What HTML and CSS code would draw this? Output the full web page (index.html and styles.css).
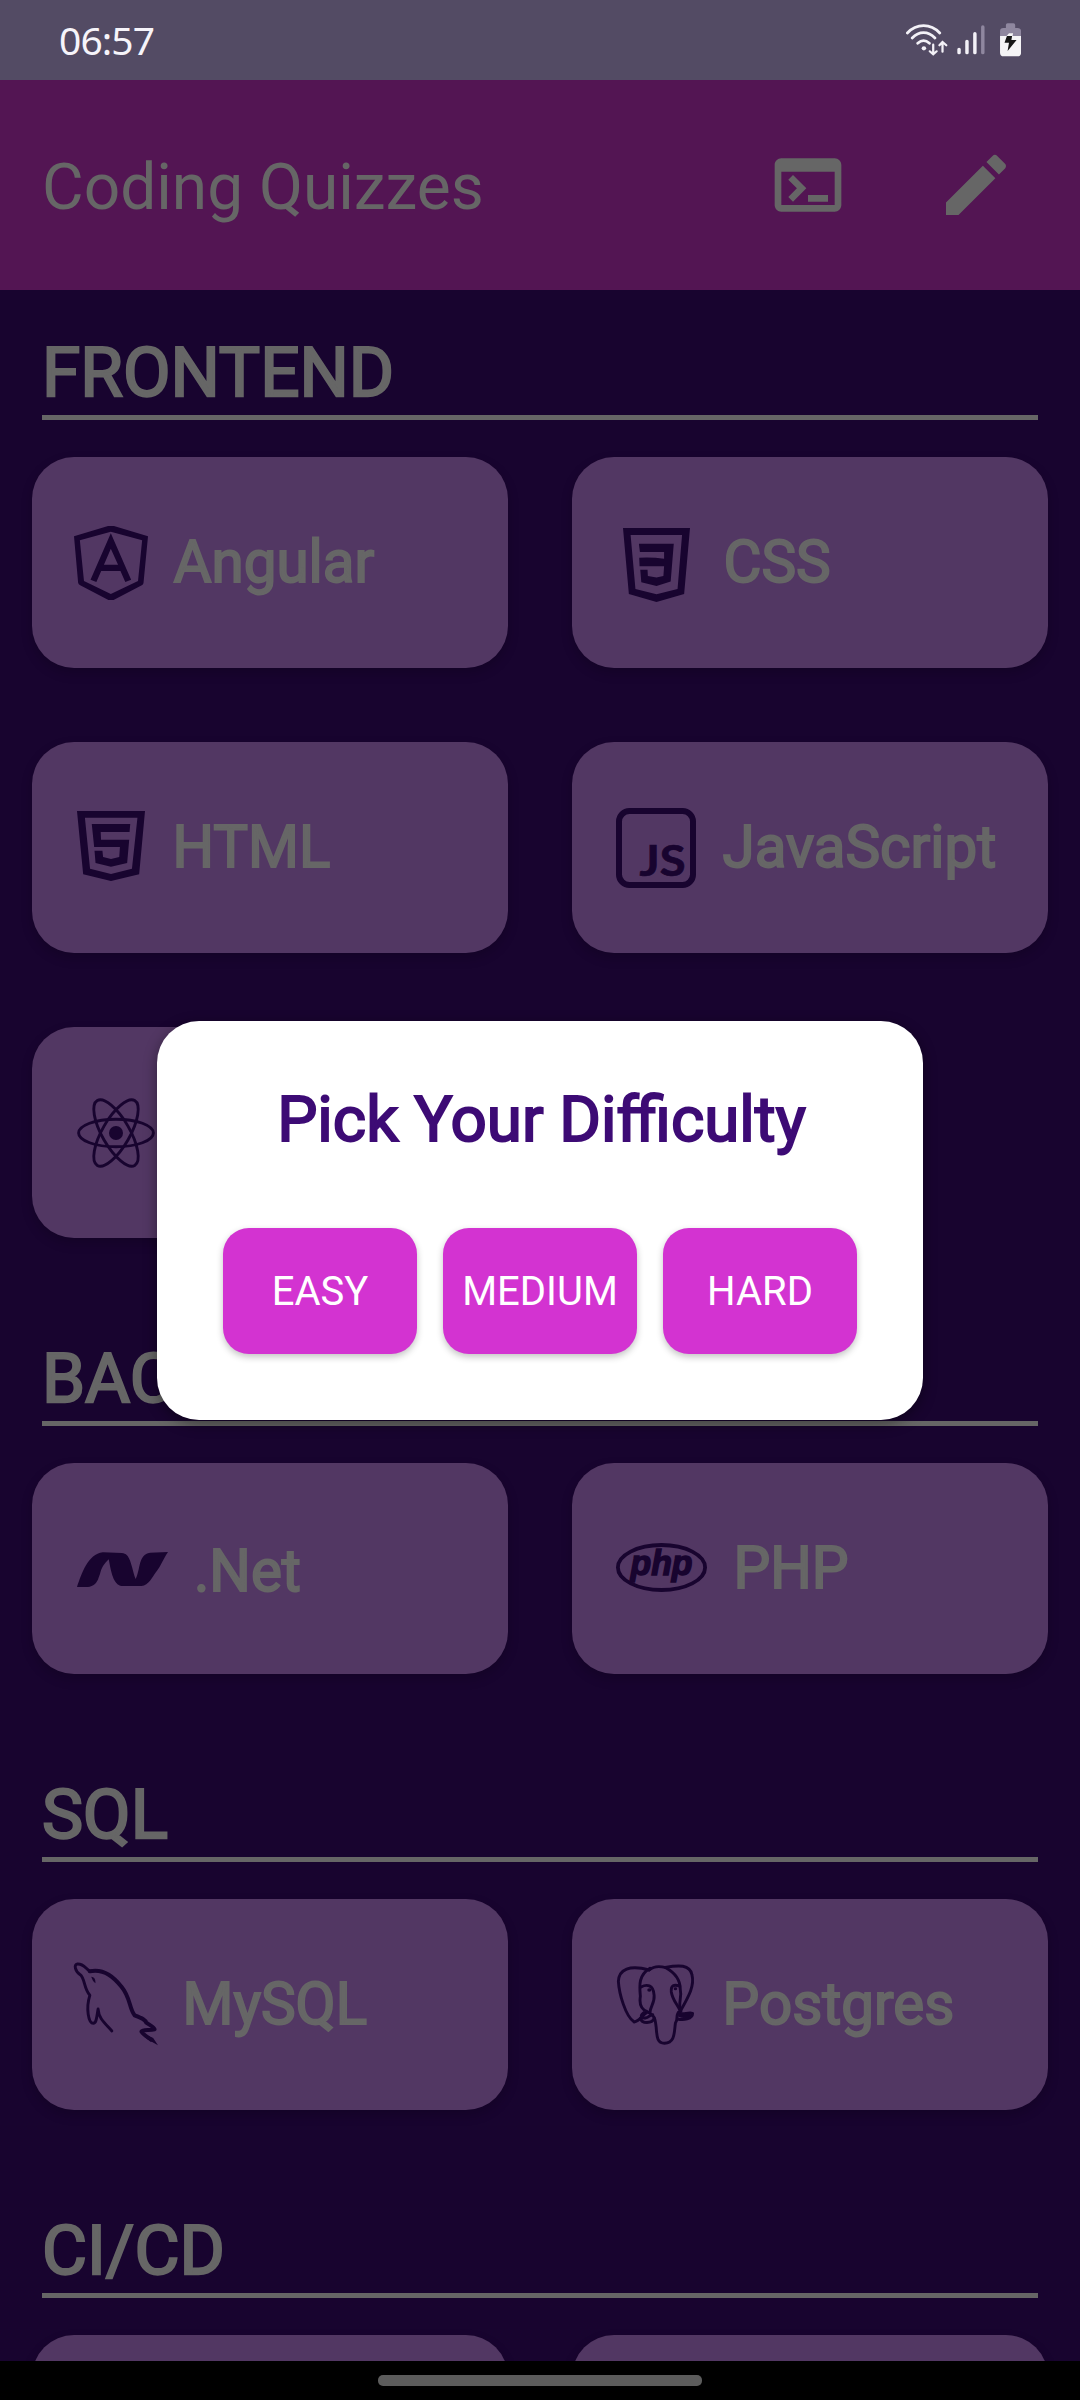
FILE: index.html
```html
<!DOCTYPE html>
<html lang="en">
<head>
<meta charset="utf-8">
<title>Coding Quizzes</title>
<link rel="stylesheet" href="styles.css">
</head>
<body>
<div class="screen">
  <div class="status-bar">
    <span class="clock">06:57</span>
    <svg class="status-icons" viewBox="1063 68 335 100" preserveAspectRatio="none">
      <g fill="none" stroke="#f3f1f7" stroke-linecap="round">
        <path stroke-width="8" d="M1067 98Q1087 76 1114 76T1161 98M1081 113Q1096 97 1114 97T1147 113M1097 129Q1114 113 1131 129"/>
        <path stroke-width="6.500" d="M1142 133V161M1132 153L1142 162L1152 153M1169 154V126M1160 135L1169 125L1180 135"/>
        <path stroke-width="10" d="M1217 147V157M1240 123V157M1263 100V157"/>
        <path stroke="#8f879f" stroke-width="10" d="M1286 80V157"/>
      </g>
      <circle cx="1115" cy="144" r="6.500" fill="#f3f1f7"/>
      <path fill="#8f879f" d="M1336 107V93Q1336 83 1346 83H1353V74Q1353 69 1358 69H1375Q1380 69 1380 74V83H1387Q1397 83 1397 93V107Z"/>
      <path fill="#f5f4f6" d="M1336 107H1355L1362 99H1374L1372 107H1397V157Q1397 168 1386 168H1347Q1336 168 1336 157Z"/>
      <path fill="#161616" d="M1356 107H1371L1369 119H1384L1358 152L1362 127H1349Z"/>
    </svg>
  </div>

  <header class="app-bar">
    <h1 class="app-title">Coding Quizzes</h1>
    <svg class="action" viewBox="0 0 24 24"><path d="M20 4H4c-1.110 0-2 .9-2 2v12c0 1.100.89 2 2 2h16c1.100 0 2-.9 2-2V6c0-1.100-.9-2-2-2zm0 14H4V8h16v10zm-2-1h-6v-2h6v2zM7.500 17l-1.410-1.410L8.670 13l-2.590-2.590L7.500 9l4 4-4 4z"/></svg>
    <svg class="action" viewBox="0 0 24 24"><path d="M3 17.250V21h3.750L17.810 9.940l-3.750-3.750L3 17.250zM20.710 7.040c.39-.39.39-1.020 0-1.410l-2.340-2.340a.996.996 0 0 0-1.410 0l-1.830 1.830 3.750 3.750 1.830-1.830z"/></svg>
  </header>

  <main class="content">
    <section>
      <h2 class="heading">FRONTEND</h2>
      <div class="grid">
        <div class="card">
          <svg class="icon angular" viewBox="215 288 215 222" preserveAspectRatio="none">
            <path fill-rule="evenodd" d="M215 319L314 288H331L430 319L417 458Q417 463 412 466L330 510H315L233 466Q228 463 227 458ZM232 331L244 453L322 492L401 453L413 331L322 305Z"/>
            <path fill-rule="evenodd" d="M322 310L381 449L364 456L350 423H294L280 456L263 449ZM322 356L302 404H343Z"/>
          </svg>
          <span class="label">Angular</span>
        </div>
        <div class="card">
          <svg class="icon css" viewBox="240 294 194 221" preserveAspectRatio="none">
            <path fill-rule="evenodd" d="M240 294H434L417 491L337 515L257 491ZM262 315L276 476L337 492L398 476L411 315Z"/>
            <path d="M286 341H387L378 454L337 467L293 456L290 419H311L312 437L337 442L357 437L359 408H288L287 383Q325 381 359 386V366H289Z"/>
          </svg>
          <span class="label">CSS</span>
        </div>
        <div class="card">
          <svg class="icon html" viewBox="223 273 198 210" preserveAspectRatio="none">
            <path fill-rule="evenodd" d="M223 273H421L404 463L322 483L241 463ZM246 293L261 446L322 462L383 446L399 293Z"/>
            <path d="M266 312H378L376 336H292L293 359H375L369 429L322 440L277 429L274 392H297L299 411L322 417L346 411L348 381H273Z"/>
          </svg>
          <span class="label">HTML</span>
        </div>
        <div class="card">
          <svg class="icon js" viewBox="0 0 80 80">
            <rect class="line" x="3" y="3" width="74" height="74" rx="10.500" stroke-width="6"/>
            <text class="js-text" x="23.500" y="68.200" textLength="46" lengthAdjust="spacingAndGlyphs">JS</text>
          </svg>
          <span class="label">JavaScript</span>
        </div>
        <div class="card">
          <svg class="icon react" viewBox="-39 -39 78 78">
            <g class="line" stroke-width="2.900">
              <ellipse rx="37.400" ry="13.800"/>
              <ellipse rx="37.400" ry="13.800" transform="rotate(60)"/>
              <ellipse rx="37.400" ry="13.800" transform="rotate(120)"/>
            </g>
            <circle r="7"/>
          </svg>
        </div>
      </div>
    </section>

    <section>
      <h2 class="heading">BACKEND</h2>
      <div class="grid">
        <div class="card">
          <svg class="icon dotnet" viewBox="225 335 264 106" preserveAspectRatio="none">
            <path d="M225 441C239 400 256 342 300 336L355 338C380 339 381 374 395 417C410 386 402 343 437 337L489 335C474 358 469 376 457 392C444 410 433 437 412 438H355C330 435 324 394 317 357C289 387 298 391 286 418C279 434 268 441 250 441Z"/>
          </svg>
          <span class="label label-low">.Net</span>
        </div>
        <div class="card">
          <svg class="icon php" viewBox="0 0 91 49">
            <ellipse class="line" cx="45.500" cy="24.500" rx="43.600" ry="22.500" stroke-width="3.800"/>
            <text class="php-text" x="14.500" y="32" textLength="62" lengthAdjust="spacingAndGlyphs">php</text>
          </svg>
          <span class="label">PHP</span>
        </div>
      </div>
    </section>

    <section>
      <h2 class="heading">SQL</h2>
      <div class="grid">
        <div class="card">
          <svg class="icon mysql" viewBox="107 309 122 247" preserveAspectRatio="none">
            <path class="line thin" d="M162 513C151 488 143 476 142 447C140 468 140 490 135 490C128 490 124 445 130 406C121 385 123 355 116 344C109 335 106 313 112 312C121 311 123 324 130 334"/>
            <path class="line thick" d="M130 334C152 325 166 355 176 380C189 412 187 445 195 466C207 475 211 480 212 488C216 494 223 500 224 508C216 512 207 508 205 515C208 526 215 532 219 539"/>
            <path d="M215 528L222 534L229 556L212 536ZM132 350Q139 352 138 370Q134 364 132 350Z"/>
          </svg>
          <span class="label">MySQL</span>
        </div>
        <div class="card">
          <svg class="icon postgres" viewBox="896 316 112 238" preserveAspectRatio="none">
            <g class="line thin">
              <path d="M939 459C933 466 929 485 921 487C908 470 899 400 898 365C899 329 914 315 943 331"/>
              <path d="M944 326C926 348 929 382 930 410C928 435 932 450 940 456C952 472 951 473 953 503C954 535 955 551 965 551C981 550 979 517 981 490C986 475 980 465 987 456"/>
              <path d="M931 382C939 373 949 374 950 407C951 431 944 441 944 459"/>
              <path d="M943 331C950 318 960 320 967 324C981 340 988 360 988 388C991 415 984 430 989 455"/>
              <path d="M966 323C986 316 1002 314 1005 345C1009 378 1001 408 988 455C985 436 977 424 975 397C974 377 979 374 987 379"/>
              <path d="M935 459C929 468 931 476 937 475C943 473 942 467 948 465M930 476C932 493 947 493 950 476M985 459C992 468 998 457 1006 461C1006 479 992 482 984 478M987 468Q994 474 1001 467"/>
            </g>
            <ellipse cx="943" cy="391" rx="3" ry="5"/><ellipse cx="981" cy="387" rx="2.500" ry="4.500"/>
          </svg>
          <span class="label">Postgres</span>
        </div>
      </div>
    </section>

    <section>
      <h2 class="heading">CI/CD</h2>
      <div class="grid">
        <div class="card"></div>
        <div class="card"></div>
      </div>
    </section>
  </main>

  <div class="nav-bar"><span class="nav-pill"></span></div>

  <div class="dialog">
    <h2 class="dialog-title">Pick Your Difficulty</h2>
    <div class="choices">
      <button class="choice">EASY</button>
      <button class="choice">MEDIUM</button>
      <button class="choice">HARD</button>
    </div>
  </div>
</div>
</body>
</html>
```
FILE: styles.css
```css
* { box-sizing: border-box; }

body {
  margin: 0;
  background: #18042f;
  font-family: Roboto, sans-serif;
}

h1, h2 { margin: 0; font-weight: 400; }

.screen {
  position: relative;
  display: flex;
  flex-direction: column;
  width: 1080px;
  height: 2400px;
  overflow: hidden;
}

.status-bar {
  display: flex;
  flex: none;
  align-items: center;
  justify-content: space-between;
  height: 80px;
  padding: 0 58.600px 0 59px;
  background: #534b64;
}

.clock {
  font: 39px/80px "Noto Sans", sans-serif;
  letter-spacing: -0.900px;
  color: #f6f4fa;
}

.status-icons { width: 115.400px; height: 33.300px; }

.app-bar {
  display: flex;
  flex: none;
  align-items: center;
  gap: 88.500px;
  height: 210px;
  padding: 0 64px 0 42px;
  background: #531553;
  color: #666;
}

.app-title { flex: 1; padding-top: 5px; font-size: 64px; }
.action { width: 80px; height: 80px; fill: #666; }

.content {
  display: flex;
  flex: 1;
  flex-direction: column;
  gap: 99px;
  min-height: 0;
  padding: 41px 32px 0;
  overflow: hidden;
}

.heading {
  height: 89px;
  margin: 0 10px 37px;
  border-bottom: 5px solid #666;
  font-size: 69.200px;
  line-height: 84px;
  color: #666;
  -webkit-text-stroke: 2.250px #666;
}

.grid {
  display: grid;
  grid-template-columns: 476px 476px;
  gap: 74px 64px;
}

.card {
  display: flex;
  align-items: center;
  height: 211px;
  border-radius: 42px;
  background: #523763;
  box-shadow: 0 5px 12px rgba(0, 0, 0, 0.180);
}

.label {
  font-size: 58.300px;
  line-height: 70px;
  color: #666;
  margin: 0 0 2px 1.500px;
  -webkit-text-stroke: 1.900px #666;
}

.label-low { margin: 4px 0 0 2px; }

.icon { flex: none; fill: #18042f; overflow: visible; }
.line { fill: none; stroke: #18042f; stroke-linecap: round; stroke-linejoin: round; }
.thin, .thin path { stroke-width: 2.900px; vector-effect: non-scaling-stroke; }
.thick { stroke-width: 4px; vector-effect: non-scaling-stroke; }

.angular { width: 74px; height: 74px; margin: 0 24px 0 42px; }
.css { width: 67px; height: 74px; margin: 4px 32px 0 51px; }
.html { width: 68px; height: 70px; margin: 0 26px 4px 45px; }
.js { width: 80px; height: 80px; margin: 0 25px 0 44px; }
.react { width: 78px; height: 78px; margin: 0 25px 0 45px; }
.dotnet { width: 91px; height: 35px; margin: 2px 24px 0 45px; }
.php { width: 91px; height: 49px; margin: 0 25px 2px 44px; }
.mysql { width: 84px; height: 82.300px; margin: 0 23px 0 42px; }
.postgres { width: 77px; height: 79.300px; margin: 0 27px 0 45px; }

.js-text { font: 700 42px Lato, sans-serif; stroke: #18042f; stroke-width: 0.700px; }
.php-text { font: italic 700 35px "Liberation Sans", sans-serif; stroke: #18042f; stroke-width: 1.500px; }

.nav-bar {
  display: flex;
  flex: none;
  align-items: center;
  justify-content: center;
  height: 39px;
  background: #000;
}

.nav-pill { width: 324px; height: 11px; border-radius: 5px; background: #5c5c5c; }

.dialog {
  position: absolute;
  top: 1021px;
  left: 157px;
  width: 766px;
  height: 399px;
  padding: 60px 66px 0;
  border-radius: 42px;
  background: #fff;
  box-shadow: 0 4px 14px rgba(0, 0, 0, 0.400);
}

.dialog-title {
  padding-left: 3px;
  font-size: 63.700px;
  line-height: 78px;
  text-align: center;
  white-space: nowrap;
  color: #3d0b75;
  -webkit-text-stroke: 2px #3d0b75;
}

.choices {
  display: grid;
  grid-template-columns: repeat(3, 194px);
  gap: 26px;
  margin-top: 69px;
}

.choice {
  height: 126px;
  padding: 0;
  border: 0;
  border-radius: 26px;
  background: #d333d1;
  box-shadow: 0 3px 7px rgba(0, 0, 0, 0.240);
  font: 40px Roboto, sans-serif;
  color: #fff;
}
```
